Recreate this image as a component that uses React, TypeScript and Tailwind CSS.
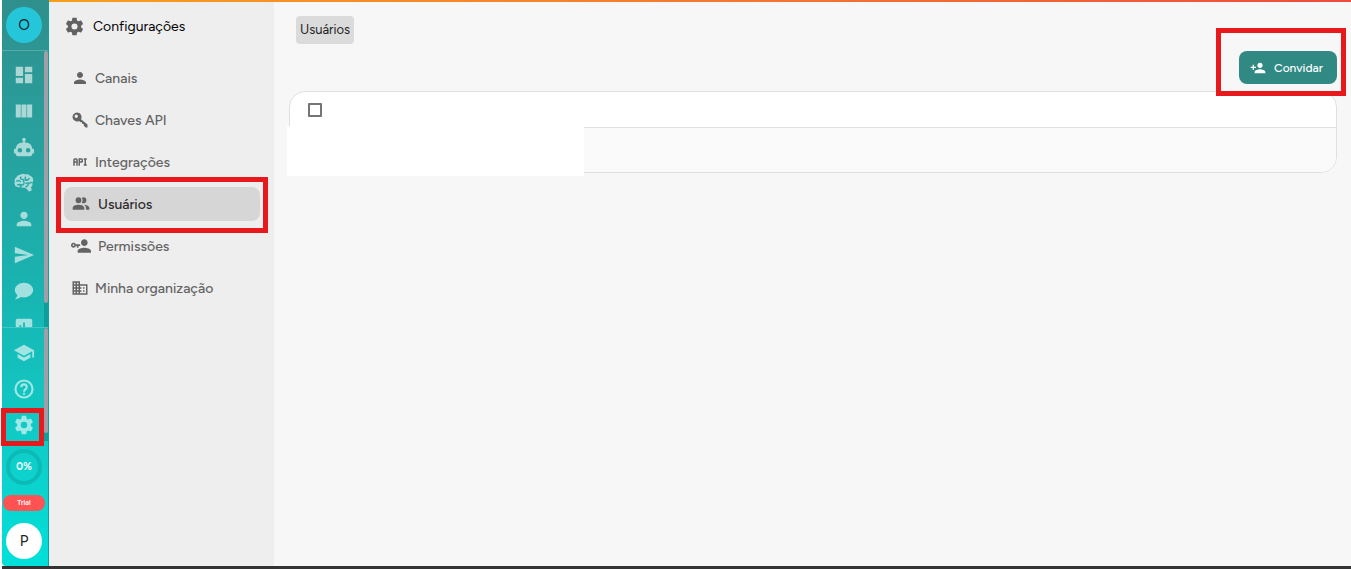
import React from "react";
import {
  MdDashboard,
  MdPerson,
  MdSend,
  MdAssessment,
  MdSchool,
  MdDomain,
  MdPersonAdd,
} from "react-icons/md";

type IconProps = { className?: string };

function Glyph({ d, className }: IconProps & { d: string }) {
  return (
    <svg viewBox="0 0 24 24" fill="currentColor" aria-hidden="true" className={className}>
      <path fillRule="evenodd" d={d} />
    </svg>
  );
}

const ColumnsIcon = (p: IconProps) => (
  <Glyph {...p} d="M3 19h5.500V5H3zM9.200 19h5.500V5H9.200zM15.400 5v14h5.500V5z" />
);
const RobotIcon = (p: IconProps) => (
  <Glyph
    {...p}
    d="M12 2a2 2 0 0 1 2 2c0 .74-.4 1.39-1 1.73V7h1a7 7 0 0 1 7 7h1a1 1 0 0 1 1 1v3a1 1 0 0 1-1 1h-1v1a2 2 0 0 1-2 2H5a2 2 0 0 1-2-2v-1H2a1 1 0 0 1-1-1v-3a1 1 0 0 1 1-1h1a7 7 0 0 1 7-7h1V5.73c-.6-.34-1-.99-1-1.73a2 2 0 0 1 2-2M7.5 13A2.5 2.5 0 0 0 5 15.5 2.5 2.5 0 0 0 7.5 18a2.5 2.5 0 0 0 2.5-2.5A2.5 2.5 0 0 0 7.5 13m9 0a2.5 2.5 0 0 0-2.5 2.5 2.5 2.5 0 0 0 2.5 2.5 2.5 2.5 0 0 0 2.5-2.5 2.5 2.5 0 0 0-2.5-2.5z"
  />
);
const BrainIcon = ({ className }: IconProps) => (
  <svg viewBox="0 0 24 24" aria-hidden="true" className={className}>
    <mask id="brain-folds">
      <rect width="24" height="24" fill="white" />
      <g fill="none" stroke="black" strokeWidth="1.400" strokeLinecap="round">
        <path d="M4 10c1.500-.8 3-.5 4 .5M8.500 5.500c-1 1.500 0 2.500 1.500 2.500s2.200 1.200 1.300 2.300M5 14c1.500-.8 3.500-.5 5 .3 1.500-.3 2.200-1.500 2.200-3M7.500 13.700c0 1.200.5 2 1.500 2.500M13.500 5.500c-.6 1.500 0 2.700 1.500 3M13 8.500c1.500 1.200 4 .5 4.500-1.500M14 12.200h3c1.500 0 2.700-1.200 4-.7M16.700 12.300c0 2-1 3.300-2.700 4" />
      </g>
    </mask>
    <path
      fill="currentColor"
      mask="url(#brain-folds)"
      d="M21.33 12.91c.09 1.55-.62 3.04-1.89 3.95l.77 1.49c.23.45.26.98.06 1.45-.19.47-.58.84-1.06 1l-.79.25a1.69 1.69 0 0 1-1.86-.55L14.44 18c-.89-.15-1.73-.53-2.44-1.1-.5.15-1 .23-1.5.23-.88 0-1.76-.27-2.5-.79-.53.16-1.07.23-1.62.22-.79.01-1.57-.15-2.3-.45a4.1 4.1 0 0 1-2.43-3.61c-.08-.72.04-1.45.35-2.11-.29-.75-.32-1.57-.07-2.33C2.3 7.11 3 6.32 3.87 5.82c.58-1.69 2.21-2.82 4-2.7 1.6-1.5 4.05-1.66 5.83-.37.42-.11.86-.17 1.3-.17 1.36-.03 2.65.57 3.5 1.64 2.04.53 3.5 2.35 3.58 4.47.05 1.11-.25 2.2-.86 3.13.07.36.11.72.11 1.09"
    />
  </svg>
);
const ChatIcon = (p: IconProps) => (
  <Glyph
    {...p}
    d="M12 3c5.5 0 10 3.58 10 8s-4.5 8-10 8c-1.24 0-2.43-.18-3.53-.5C5.55 21 2 21 2 21c2.33-2.33 2.7-3.9 2.75-4.5C3.05 15.07 2 13.13 2 11c0-4.42 4.5-8 10-8z"
  />
);
const HelpIcon = ({ className }: IconProps) => (
  <svg
    viewBox="0 0 24 24"
    fill="none"
    stroke="currentColor"
    strokeWidth="2.300"
    aria-hidden="true"
    className={className}
  >
    <circle cx="12" cy="12" r="9.300" />
    <path d="M9 10a3 3 0 1 1 6 0c0 2-3 2.300-3 5M12 16v2.200" />
  </svg>
);
const CogIcon = (p: IconProps) => (
  <Glyph
    {...p}
    d="M12 15.5A3.5 3.5 0 0 1 8.500 12 3.500 3.500 0 0 1 12 8.500a3.500 3.500 0 0 1 3.500 3.500 3.500 3.500 0 0 1-3.500 3.500m7.430-2.530c.04-.32.07-.64.07-.97 0-.33-.03-.66-.07-1l2.110-1.630c.19-.15.24-.42.12-.64l-2-3.460c-.12-.22-.39-.31-.61-.22l-2.490 1c-.52-.39-1.060-.73-1.690-.98l-.37-2.650A.506.506 0 0 0 14 2h-4c-.25 0-.46.18-.5.42l-.37 2.650c-.63.25-1.170.59-1.690.98l-2.490-1c-.22-.09-.49 0-.61.22l-2 3.460c-.13.22-.07.49.12.64L4.570 11c-.04.34-.07.67-.07 1 0 .33.03.65.07.97l-2.110 1.660c-.19.15-.25.42-.12.64l2 3.460c.12.22.39.3.61.22l2.490-1.010c.52.4 1.060.74 1.690.99l.37 2.650c.04.24.25.42.5.42h4c.25 0 .46-.18.5-.42l.37-2.650c.63-.26 1.170-.59 1.690-.99l2.490 1.010c.22.08.49 0 .61-.22l2-3.460c.12-.22.07-.49-.12-.64z"
  />
);
const KeyIcon = (p: IconProps) => (
  <Glyph
    {...p}
    d="M8 2a6 6 0 1 0 2.800 11.300l1.700 1.700 1.900-.2.300 2.200 2.200.3.200 2.200 2.500 2.500H22v-4L13.300 10.900A6 6 0 0 0 8 2zM7 4.800a2.200 2.200 0 1 1 0 4.400 2.200 2.200 0 0 1 0-4.400z"
  />
);
const ApiIcon = (p: IconProps) => (
  <Glyph
    {...p}
    d="M7 7H5a2 2 0 0 0-2 2v8h2v-4h2v4h2V9a2 2 0 0 0-2-2m0 4H5V9h2m7-2h-4v10h2v-4h2a2 2 0 0 0 2-2V9a2 2 0 0 0-2-2m0 4h-2V9h2m6 0v6h1v2h-4v-2h1V9h-1V7h4v2z"
  />
);
const PeopleIcon = (p: IconProps) => (
  <Glyph
    {...p}
    d="M16 17v2H2v-2s0-4 7-4 7 4 7 4m-3.500-9.500A3.500 3.500 0 1 0 9 11a3.500 3.500 0 0 0 3.500-3.500m3.440 5.500A5.320 5.320 0 0 1 18 17v2h4v-2s0-3.630-6.060-4M15 4a3.390 3.390 0 0 0-1.930.590 5 5 0 0 1 0 5.810A3.390 3.390 0 0 0 15 11a3.500 3.500 0 0 0 0-7z"
  />
);
const PersonKeyIcon = (p: IconProps) => (
  <Glyph
    {...p}
    d="M11 10v2H9v2H7v-2H5.800c-.4 1.200-1.500 2-2.800 2-1.700 0-3-1.300-3-3s1.300-3 3-3c1.300 0 2.400.8 2.800 2H11M3 10c-.6 0-1 .4-1 1s.4 1 1 1 1-.4 1-1-.4-1-1-1m13 4c2.700 0 8 1.300 8 4v2H8v-2c0-2.700 5.300-4 8-4m0-2c-2.200 0-4-1.800-4-4s1.800-4 4-4 4 1.800 4 4-1.800 4-4 4z"
  />
);

const railTop = [
  { label: "Painel", Icon: MdDashboard },
  { label: "Quadros", Icon: ColumnsIcon },
  { label: "Robôs", Icon: RobotIcon },
  { label: "Inteligência", Icon: BrainIcon },
  { label: "Contatos", Icon: MdPerson },
  { label: "Campanhas", Icon: MdSend },
  { label: "Conversas", Icon: ChatIcon },
  { label: "Relatórios", Icon: MdAssessment },
];

const railBottom = [
  { label: "Academia", Icon: MdSchool },
  { label: "Ajuda", Icon: HelpIcon },
  { label: "Ajustes", Icon: CogIcon },
];

const menu = [
  { label: "Canais", Icon: MdPerson, wide: false, active: false },
  { label: "Chaves API", Icon: KeyIcon, wide: false, active: false },
  { label: "Integrações", Icon: ApiIcon, wide: false, active: false },
  { label: "Usuários", Icon: PeopleIcon, wide: true, active: true },
  { label: "Permissões", Icon: PersonKeyIcon, wide: true, active: false },
  { label: "Minha organização", Icon: MdDomain, wide: false, active: false },
];

function Marker({ className }: IconProps) {
  return (
    <span
      aria-hidden="true"
      className={`pointer-events-none absolute z-10 border-5 border-[#e8191c] ${className}`}
    />
  );
}

function Rail() {
  return (
    <aside className="ml-0.5 flex w-[47px] shrink-0 flex-col rounded-bl border-r border-[#1a9c9a] bg-linear-to-b from-[#2f8f8c] via-[#18b3b0] to-[#00e0da]">
      <div className="flex h-[50px] shrink-0 items-center pl-1">
        <button className="flex size-9 items-center justify-center rounded-full bg-[#26c6da] text-[15px] text-[#10242a]">
          O
        </button>
      </div>
      <div className="flex h-[277px] shrink-0 border-t border-white/20">
        <nav className="flex min-w-0 flex-1 flex-col items-center overflow-hidden pt-1.5 pl-0.5 text-white/60">
          {railTop.map(({ label, Icon }) => (
            <a key={label} href="#" aria-label={label} className="flex h-9 shrink-0 items-center">
              <Icon className="size-[22px]" />
            </a>
          ))}
        </nav>
        <div className="w-1 bg-[#0e9f9c]">
          <div className="h-[252px] rounded-full bg-[#a09fa8]" />
        </div>
      </div>
      <div className="flex h-[114px] shrink-0 border-t border-white/20">
        <nav className="flex min-w-0 flex-1 flex-col items-center pt-[7px] pl-0.5 text-white/60">
          {railBottom.map(({ label, Icon }) => (
            <a
              key={label}
              href="#"
              aria-label={label}
              className="relative flex h-9 shrink-0 items-center"
            >
              <Icon className="size-[22px]" />
              {label === "Ajustes" && <Marker className="top-px -left-3 h-[38px] w-[43px]" />}
            </a>
          ))}
        </nav>
        <div className="w-1 bg-[#0e9f9c]">
          <div className="h-[105px] rounded-full bg-[#a09fa8]" />
        </div>
      </div>
      <div className="flex flex-1 flex-col items-center pt-2 pr-0.5">
        <div className="flex size-9 items-center justify-center rounded-full border-4 border-[#0cbab6] text-[11px] font-bold text-white/90">
          0%
        </div>
        <div className="mt-2.5 flex h-4 w-[42px] items-center justify-center rounded-full bg-[#ff5252] text-[7px] font-semibold text-white">
          Trial
        </div>
        <button className="mt-3 flex size-9 items-center justify-center rounded-full bg-white text-[15px] text-[#222]">
          P
        </button>
      </div>
    </aside>
  );
}

function SettingsMenu() {
  return (
    <aside className="w-[225px] shrink-0 bg-[#eee]">
      <h1 className="flex h-[49px] items-center gap-2 pl-[15px] text-[14px] text-black">
        <CogIcon className="size-[21px] text-[#616161]" />
        Configurações
      </h1>
      <nav className="flex flex-col gap-2 pt-2.5 pr-3.5 pl-[15px]">
        {menu.map(({ label, Icon, wide, active }) => (
          <a
            key={label}
            href="#"
            className={`relative flex h-[34px] items-center rounded-lg pl-[7px] text-[14px] font-medium ${
              active ? "bg-[#d6d6d6] text-[#2a2a2a]" : "text-[#636363]"
            } ${wide ? "gap-[7px]" : "gap-1.5"}`}
          >
            <Icon className={`shrink-0 text-[#636363] ${wide ? "size-5" : "size-[18px]"}`} />
            {label}
            {active && <Marker className="-top-2.5 -right-2 h-[56px] w-[212px]" />}
          </a>
        ))}
      </nav>
    </aside>
  );
}

function UsersPage() {
  return (
    <main className="min-w-0 flex-1 bg-[#f7f7f7] pr-3.5 pl-[15px]">
      <div className="flex pt-3.5 pl-[7px]">
        <span className="inline-flex h-7 items-center rounded bg-[#dbdbdb] px-1 text-[13px] text-[#1e1e1e]">
          Usuários
        </span>
      </div>
      <div className="mt-[7px] flex justify-end">
        <div className="relative">
          <button className="flex h-[33px] w-[98px] items-center gap-2 rounded-lg bg-[#318984] pl-[11px] text-[12px] font-medium text-white">
            <MdPersonAdd className="size-4" />
            Convidar
          </button>
          <Marker className="-top-[23px] -right-[9px] h-[68px] w-[130px]" />
        </div>
      </div>
      <div className="relative mt-[7px]">
        <table className="w-full border-separate border-spacing-0 overflow-hidden rounded-2xl border border-[#e0e0e0] bg-white">
          <thead>
            <tr>
              <th className="h-9 border-b border-[#e0e0e0] pl-[18px] text-left">
                <input
                  type="checkbox"
                  aria-label="Selecionar todos"
                  className="block size-3.5 appearance-none rounded-[1px] border-2 border-[#757575] bg-white"
                />
              </th>
            </tr>
          </thead>
          <tbody>
            <tr>
              <td className="h-11 bg-[#fafafa]" />
            </tr>
          </tbody>
        </table>
        <div className="absolute top-[35px] -left-0.5 h-[50px] w-[297px] bg-white" />
      </div>
    </main>
  );
}

export default function App() {
  return (
    <div className="flex min-h-screen flex-col bg-white font-['Figtree','Lato',sans-serif]">
      <div className="ml-[49px] h-0.5 bg-linear-to-r from-[#f5a01a] to-[#ee4b3c]" />
      <div className="-mt-0.5 flex flex-1">
        <Rail />
        <div className="mt-0.5 flex min-w-0 flex-1">
          <SettingsMenu />
          <UsersPage />
        </div>
      </div>
      <footer className="ml-0.5 h-[3px] bg-[#333]" />
    </div>
  );
}
